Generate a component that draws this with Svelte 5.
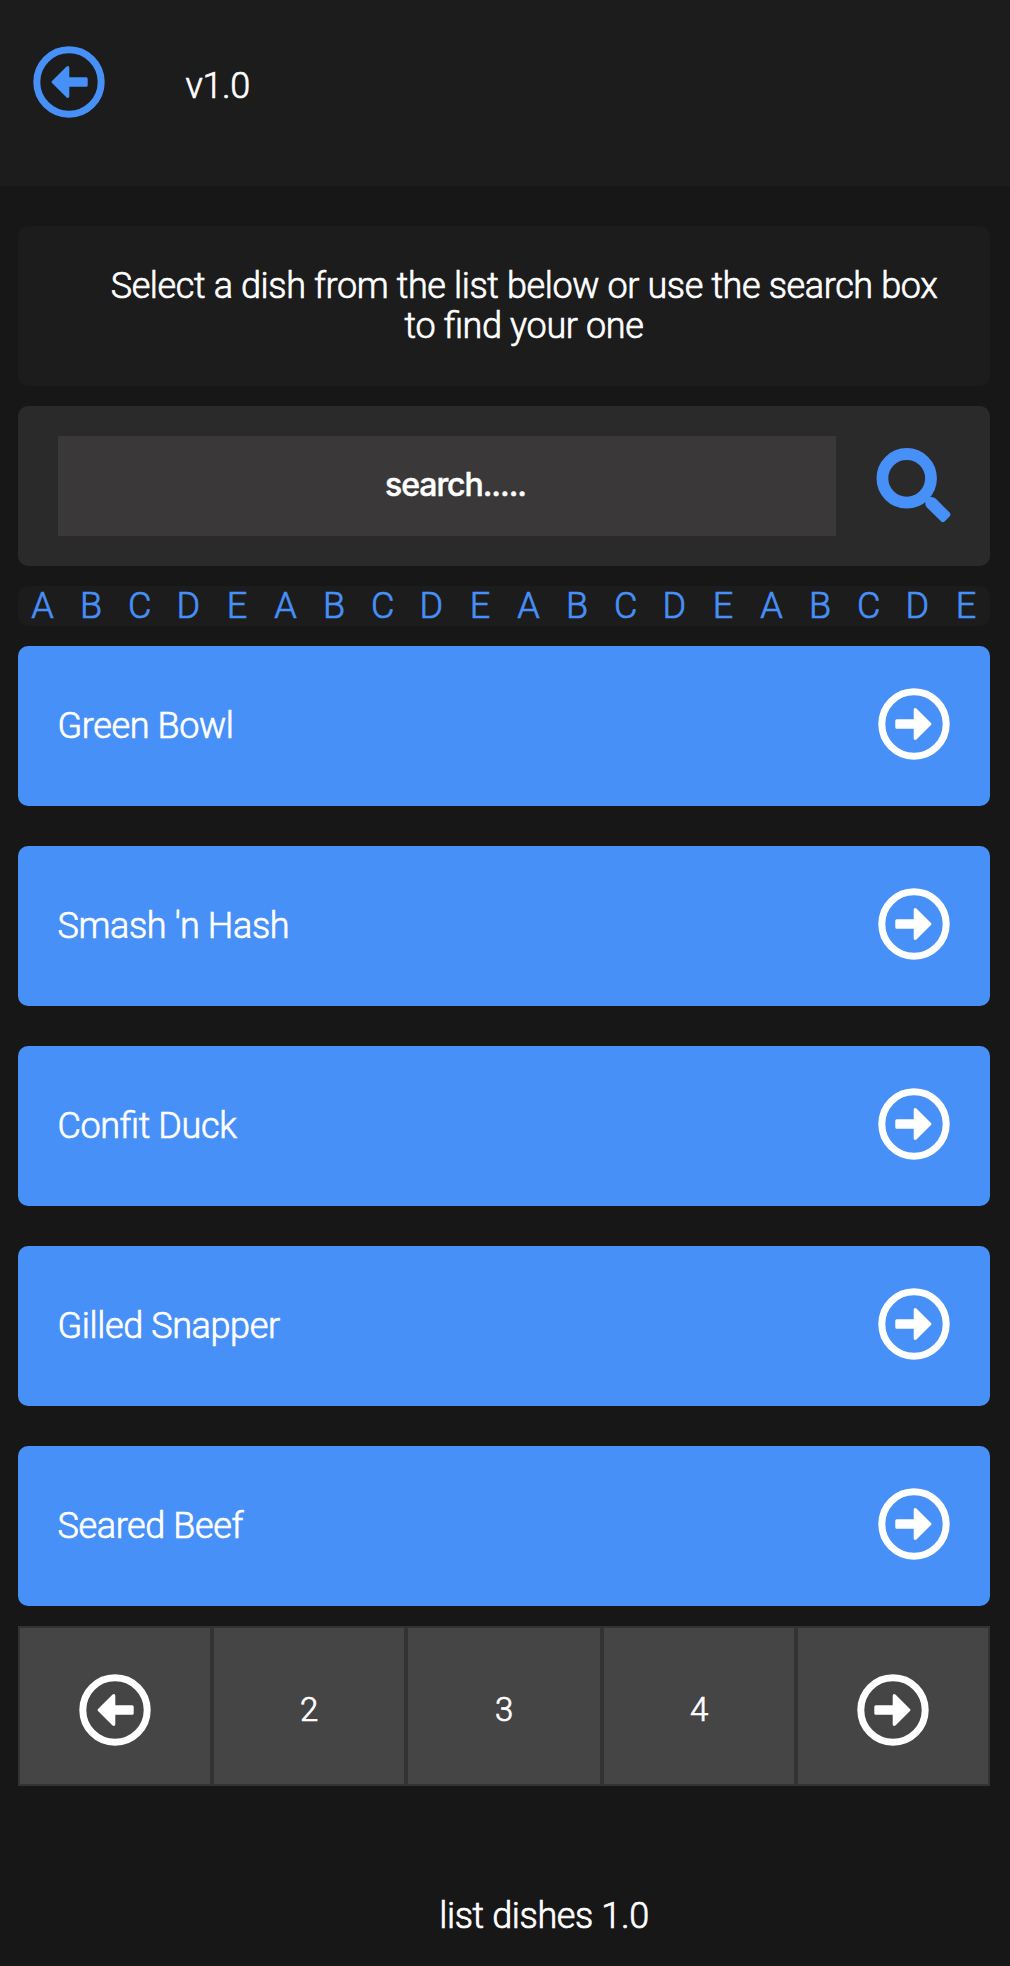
<script>
  const letters = [...'ABCDEABCDEABCDEABCDE'];
  const dishes = ['Green Bowl', "Smash 'n Hash", 'Confit Duck', 'Gilled Snapper', 'Seared Beef'];
  const pages = [2, 3, 4];
</script>

{#snippet arrow(left)}
  <svg class="arrow" class:left viewBox="-36 -36 72 72" aria-hidden="true">
    <circle r="32.2" fill="none" stroke="currentColor" stroke-width="7" />
    <path
      fill="currentColor"
      d="M-17.2-4.7H-.3V-14.3Q-.3-16 1.1-16Q1.9-16 2.7-15.2L17-1Q18 0 17 1L2.7 15.2Q1.9 16 1.1 16Q-.3 16-.3 14.3V4.7H-17.2Q-18.7 4.7-18.7 3.2V-3.2Q-18.7-4.7-17.2-4.7Z"
    />
  </svg>
{/snippet}

<div class="app">
  <header>
    <button class="back" aria-label="Back">{@render arrow(true)}</button>
    <span>v1.0</span>
  </header>

  <main>
    <p class="intro">Select a dish from the list below or use the search box<br />to find your one</p>

    <div class="search">
      <div class="field">search.....</div>
      <button aria-label="Search">
        <svg class="glass" viewBox="0 0 76 76" aria-hidden="true">
          <circle cx="30.7" cy="30.3" r="24.3" fill="none" stroke="currentColor" stroke-width="11.8" />
          <path
            fill="currentColor"
            d="M53 49H55.5Q58 49 59.6 50.6L73.6 64.6Q75.3 66.5 73.8 68.3L68.6 73.4Q67 75 65.2 73.5L51.2 59.8Q49.3 58 49.3 56V52.7Z"
          />
        </svg>
      </button>
    </div>

    <nav class="letters">
      {#each letters as letter}<span>{letter}</span>{/each}
    </nav>

    <div class="dishes">
      {#each dishes as dish}
        <button class="dish"><span>{dish}</span>{@render arrow(false)}</button>
      {/each}
    </div>

    <nav class="pager">
      <button aria-label="Previous">{@render arrow(true)}</button>
      {#each pages as page}<button>{page}</button>{/each}
      <button aria-label="Next">{@render arrow(false)}</button>
    </nav>
  </main>

  <footer>list dishes 1.0</footer>
</div>

<style>
  :global(body) {
    background: #171717;
  }
  .app {
    box-sizing: border-box;
    width: 1010px;
    height: 1966px;
    color: #fff;
    font: 300 36px/40px Roboto, sans-serif;
    font-feature-settings: 'liga' 1;
    letter-spacing: -0.37px;
    -webkit-text-stroke: 0.7px currentColor;
  }
  button {
    display: flex;
    align-items: center;
    margin: 0;
    padding: 0;
    border: 0;
    background: none;
    color: inherit;
    font: inherit;
    font-feature-settings: inherit;
    letter-spacing: inherit;
  }
  header {
    display: flex;
    align-items: flex-start;
    gap: 80.5px;
    box-sizing: border-box;
    height: 186px;
    padding: 46px 33px 0;
    background: #1c1c1c;
  }
  header span {
    padding-top: 20px;
  }
  .back {
    color: #4790f8;
  }
  .arrow {
    display: block;
    width: 72px;
    height: 72px;
  }
  .left {
    transform: scaleX(-1);
  }
  main {
    display: flex;
    flex-direction: column;
    gap: 20px;
    padding: 40px 20px 0 18px;
  }
  .intro {
    box-sizing: border-box;
    height: 160px;
    margin: 0;
    padding: 40px 0 0 40px;
    border-radius: 10px;
    background: #1c1c1c;
    text-align: center;
  }
  .search {
    display: flex;
    align-items: center;
    justify-content: space-between;
    box-sizing: border-box;
    height: 160px;
    padding: 0 38px 0 40px;
    border-radius: 10px;
    background: #2a2a2a;
  }
  .field {
    box-sizing: border-box;
    width: 778px;
    padding: 0 0 2px 17px;
    background: #3b3839;
    font: 500 32px/98px Inter, sans-serif;
    letter-spacing: -1.05px;
    text-align: center;
    -webkit-text-stroke: 0.5px currentColor;
  }
  .search button {
    color: #4790f8;
  }
  .glass {
    width: 76px;
    height: 76px;
  }
  .letters {
    display: grid;
    grid-template-columns: repeat(20, 1fr);
    border-radius: 10px;
    background: #1c1c1c;
    color: #4790f8;
    text-align: center;
  }
  .dishes {
    display: grid;
    gap: 40px;
  }
  .dish {
    justify-content: space-between;
    height: 160px;
    padding: 0 40.5px 0 39.5px;
    border-radius: 10px;
    background: #4790f8;
  }
  .dish .arrow {
    margin-bottom: 3.5px;
  }
  .pager {
    display: grid;
    grid-template-columns: 1fr 1fr 196px 1fr 1fr;
    height: 160px;
  }
  .pager button {
    justify-content: center;
    padding-top: 8px;
    border: 2px solid #333;
    background: #454545;
    font-size: 33px;
  }
  footer {
    padding: 110px 0 0 78px;
    text-align: center;
  }
</style>
